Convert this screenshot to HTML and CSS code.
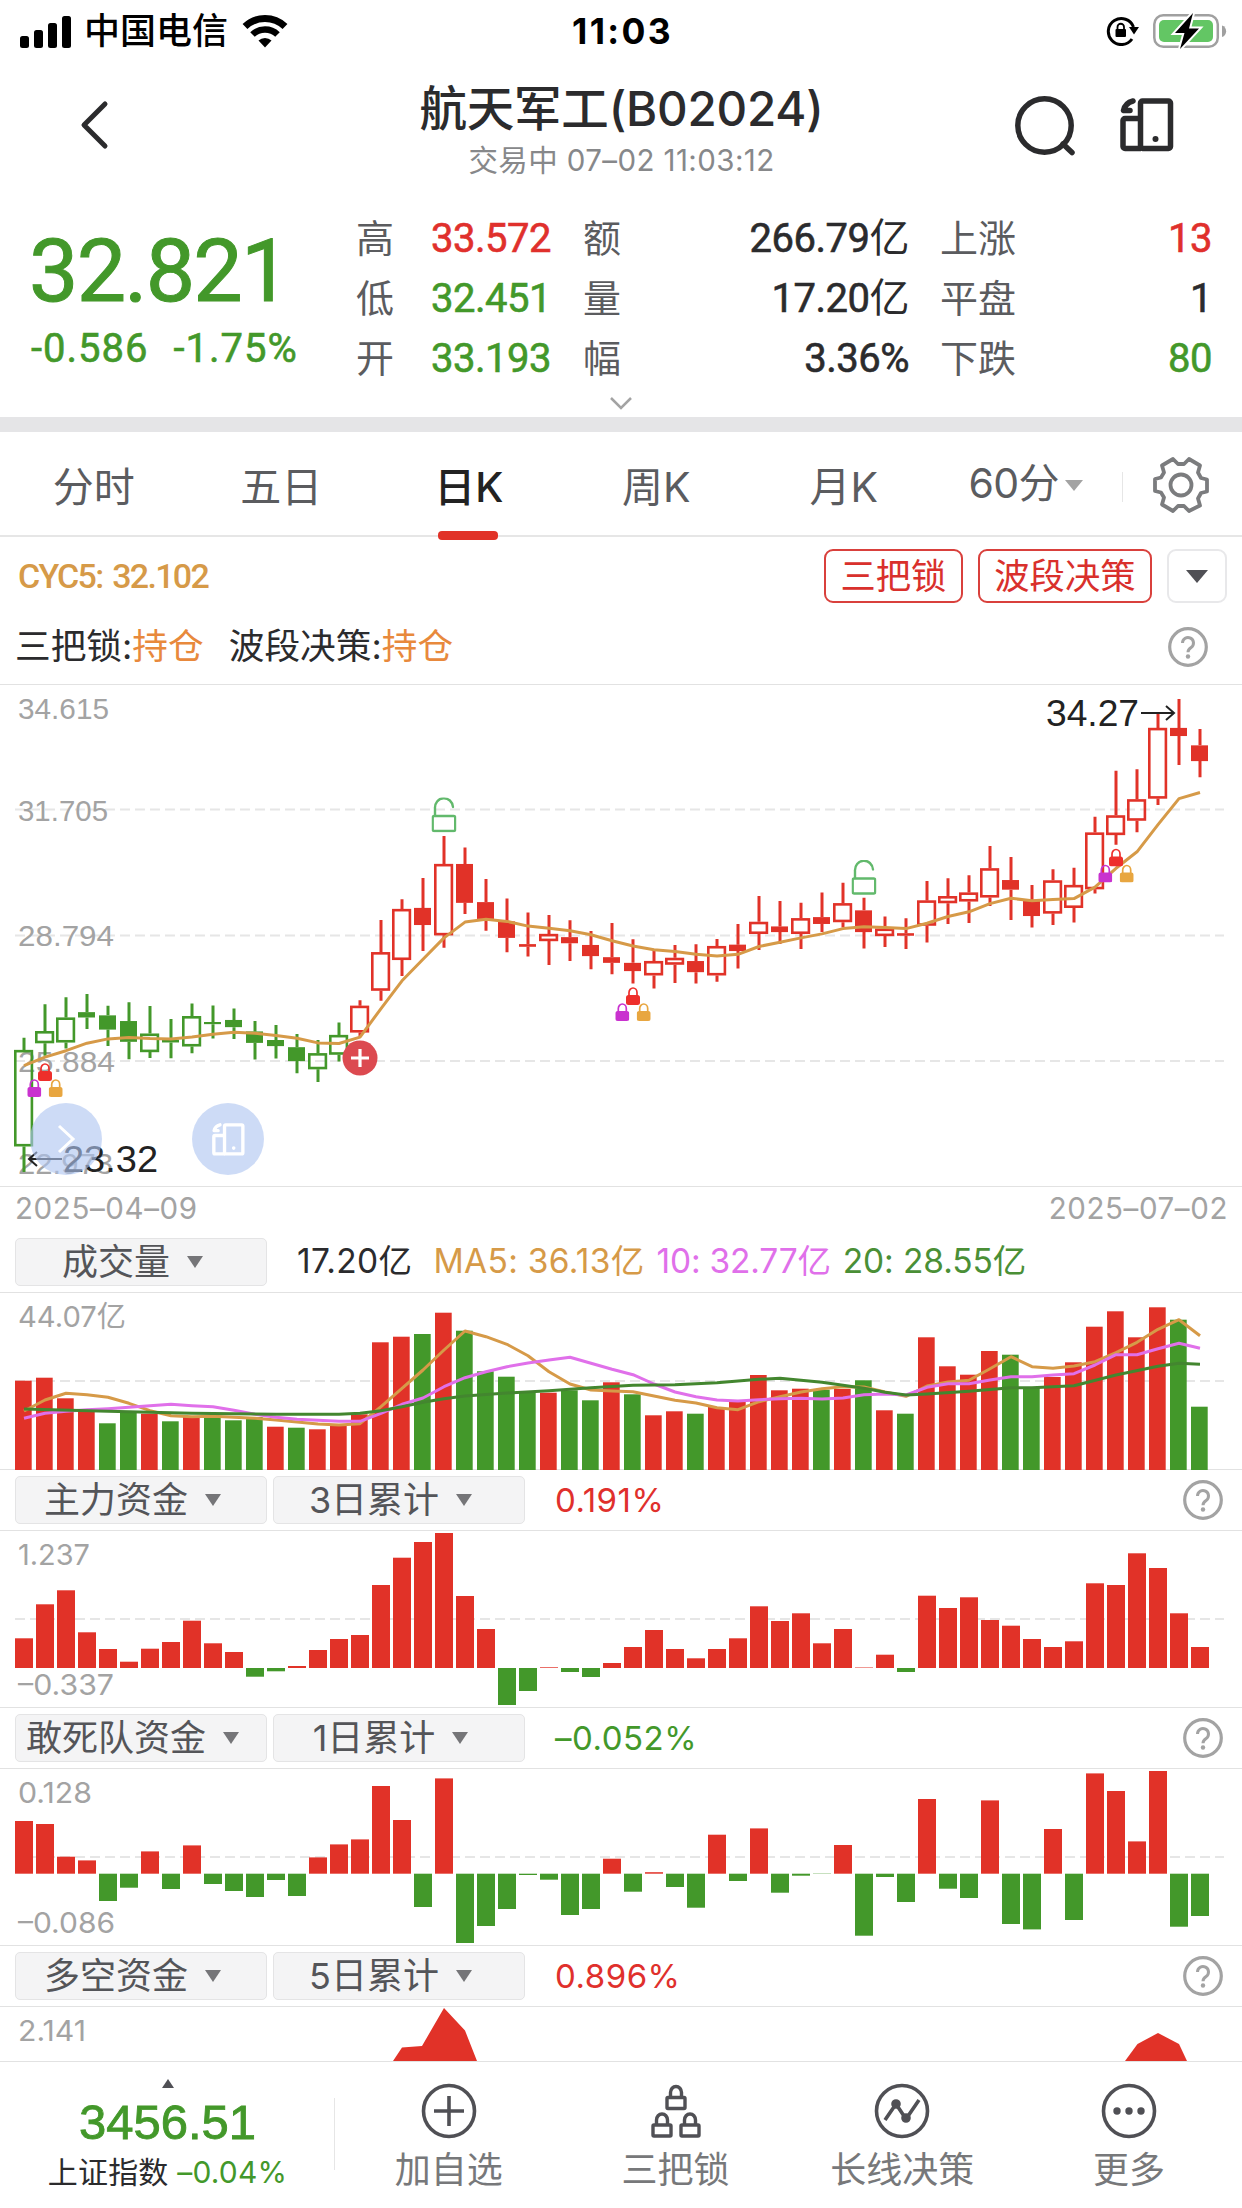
FILE: index.html
```
<!DOCTYPE html>
<html lang="zh-CN">
<head>
    <meta charset="UTF-8">
    <meta name="viewport" content="width=device-width, initial-scale=1.0">
    <title>航天军工(B02024)</title>
    <link rel="stylesheet" href="styles.css">
</head>
<body>
    <svg class="defs" width="0" height="0">
        <symbol id="i-help" viewBox="0 0 40 40">
            <circle cx="20" cy="20" r="18.3" fill="none" stroke="#a3a3a3" stroke-width="3.2"/>
            <path d="M14.5 16a5.5 5.5 0 1 1 8.6 4.5c-2.2 1.5-3.1 2.3-3.1 4.8" fill="none" stroke="#a3a3a3" stroke-width="3"/>
            <circle cx="20" cy="29.5" r="2.2" fill="#a3a3a3"/>
        </symbol>
        <symbol id="i-device" viewBox="0 0 54 54">
            <g fill="none" stroke="currentColor" stroke-width="5.5" stroke-linejoin="round">
                <rect x="20.5" y="3" width="30" height="47.5" rx="2"/>
                <path d="M20.5 20.5H5a2 2 0 0 0-2 2V48.5a2 2 0 0 0 2 2h16"/>
                <path d="M13 3C7 4.5 4.500 8 3.500 12.500H10" stroke-linecap="round"/>
            </g>
            <circle cx="35.5" cy="41" r="3" fill="currentColor"/>
        </symbol>
        <symbol id="i-lock" viewBox="0 0 14 19">
            <path d="M3 10V6.500a4 4.500 0 0 1 8 0V10" fill="none" stroke="currentColor" stroke-width="1.700"/>
            <rect x="0" y="9" width="14" height="10" rx="2.500" fill="currentColor"/>
        </symbol>
        <symbol id="i-unlock" viewBox="0 0 25 35">
            <g fill="none" stroke="#62b96c" stroke-width="2.4" stroke-linecap="round">
                <rect x="1.2" y="18.5" width="22.5" height="15" rx="1.5"/>
                <path d="M3.5 18V11a9 9.500 0 0 1 18-1.500"/>
            </g>
        </symbol>
    </svg>

    <header class="status">
        <div class="status-left">
            <svg width="52" height="33" viewBox="0 0 52 33">
                <rect x="0" y="21" width="9" height="12" rx="2.5"/>
                <rect x="14" y="15" width="9" height="18" rx="2.5"/>
                <rect x="28" y="8" width="9" height="25" rx="2.5"/>
                <rect x="42" y="1" width="9" height="32" rx="2.5"/>
            </svg>
            <span class="carrier">中国电信</span>
            <svg width="46" height="34" viewBox="0 0 46 34">
                <path d="M3 12.5a29 29 0 0 1 40 0" fill="none" stroke="#000" stroke-width="7"/>
                <path d="M10.5 20.5a18 18 0 0 1 25 0" fill="none" stroke="#000" stroke-width="6.5"/>
                <path d="M16.5 26.5a9.5 9.5 0 0 1 13 0L23 33.5z"/>
            </svg>
        </div>
        <span class="clock">11:03</span>
        <div class="status-right">
            <svg width="33" height="30" viewBox="0 0 33 30">
                <path d="M26 23A13 13 0 1 1 27.5 11" fill="none" stroke="#000" stroke-width="3"/>
                <path d="M23 11h10l-5 7.5z"/>
                <rect x="9.5" y="13" width="10.5" height="8" rx="1"/>
                <path d="M11.5 13.5v-2.5a3.2 3.2 0 0 1 6.5 0v2.5" fill="none" stroke="#000" stroke-width="1.8"/>
            </svg>
            <svg width="74" height="36" viewBox="0 0 74 36">
                <rect x="1.3" y="2.3" width="63.5" height="31.5" rx="9" fill="none" stroke="#a0a0a0" stroke-width="2.5"/>
                <rect x="6" y="7" width="54" height="22" rx="5" fill="#63c664"/>
                <path d="M69 12.5c5.5 1.5 5.5 10 0 11.5z" fill="#a0a0a0"/>
                <path d="M40 0L22 20h9.5L27 36l19-20.5H36z" stroke="#fff" stroke-width="4" paint-order="stroke"/>
            </svg>
        </div>
    </header>

    <nav class="nav">
        <svg class="back" width="32" height="50" viewBox="0 0 32 50">
            <path d="M27 4L6 25l21 21" fill="none" stroke="#2b2b2d" stroke-width="5" stroke-linecap="round" stroke-linejoin="round"/>
        </svg>
        <div class="nav-title">
            <h1>航天军工(B02024)</h1>
            <p>交易中 07–02 11:03:12</p>
        </div>
        <div class="nav-actions">
            <svg width="60" height="60" viewBox="0 0 60 60">
                <circle cx="29.5" cy="29.5" r="26.7" fill="none" stroke="#2b2b2d" stroke-width="5.5"/>
                <path d="M48 48l9 8.5" stroke="#2b2b2d" stroke-width="5.5" stroke-linecap="round"/>
            </svg>
            <svg class="device" width="54" height="54"><use href="#i-device"/></svg>
        </div>
    </nav>

    <section class="quote">
        <div class="price down">
            <div class="price-now">32.821</div>
            <div class="price-diff"><span>-0.586</span><span>-1.75%</span></div>
        </div>
        <dl class="stats">
            <dt>高</dt><dd class="up">33.572</dd><dt>额</dt><dd>266.79<i>亿</i></dd><dt>上涨</dt><dd class="up">13</dd>
            <dt>低</dt><dd class="down">32.451</dd><dt>量</dt><dd>17.20<i>亿</i></dd><dt>平盘</dt><dd>1</dd>
            <dt>开</dt><dd class="down">33.193</dd><dt>幅</dt><dd>3.36%</dd><dt>下跌</dt><dd class="down">80</dd>
        </dl>
    </section>
    <div class="expand">
        <svg width="24" height="14" viewBox="0 0 24 14"><path d="M2 2l10 10L22 2" fill="none" stroke="#a3a3a3" stroke-width="2.5"/></svg>
    </div>

    <div class="tabs">
        <span class="tab">分时</span>
        <span class="tab">五日</span>
        <span class="tab active">日K</span>
        <span class="tab">周K</span>
        <span class="tab">月K</span>
        <span class="tab tab-more">60分<b class="caret light"></b></span>
        <div class="gear">
            <svg width="56" height="56" viewBox="0 0 56 56" fill="none" stroke="#7b7c7e" stroke-width="3.8" stroke-linejoin="round">
                <path d="M20 2l5 5h6l5-5 11 6.500-2 7 3 5.500 6 1.500v12l-6 1.500-3 5.500 2 7L36 54l-5-5h-6l-5 5L9 47.500l2-7L8 35.500 2 34V22l6-1.500L11 15.500l-2-7z"/>
                <circle cx="28" cy="28" r="10.5"/>
            </svg>
        </div>
    </div>

    <div class="indicator">
        <span class="cyc">CYC5: 32.102</span>
        <span class="pill">三把锁</span>
        <span class="pill">波段决策</span>
        <span class="pill pill-drop"><b class="caret dark"></b></span>
    </div>
    <div class="signal">
        <span>三把锁:<em>持仓</em></span>
        <span>波段决策:<em>持仓</em></span>
        <svg class="help" width="40" height="40"><use href="#i-help"/></svg>
    </div>

    <div class="chart kline">
        <svg id="kline" width="1242" height="501"></svg>
        <span class="float-btn float-next">
            <svg width="20" height="30" viewBox="0 0 20 30"><path d="M3 2l14 13L3 28" fill="none" stroke="#fff" stroke-width="3"/></svg>
        </span>
        <span class="float-btn float-rotate"><svg width="33" height="33"><use href="#i-device"/></svg></span>
    </div>
    <div class="dates"><span>2025–04–09</span><span>2025–07–02</span></div>

    <div class="bar">
        <span class="select">成交量<b class="caret"></b></span>
        <div class="ma">
            <span class="c-dark">17.20亿</span>
            <span class="c-ma5">MA5: 36.13亿</span>
            <span class="c-ma10">10: 32.77亿</span>
            <span class="c-ma20">20: 28.55亿</span>
        </div>
    </div>
    <div class="chart"><svg id="volume" width="1242" height="177"></svg></div>

    <div class="bar">
        <span class="select">主力资金<b class="caret"></b></span>
        <span class="select">3日累计<b class="caret"></b></span>
        <span class="value up">0.191%</span>
        <svg class="help" width="40" height="40"><use href="#i-help"/></svg>
    </div>
    <div class="chart"><svg id="fund1" width="1242" height="177"></svg></div>

    <div class="bar">
        <span class="select">敢死队资金<b class="caret"></b></span>
        <span class="select">1日累计<b class="caret"></b></span>
        <span class="value down">–0.052%</span>
        <svg class="help" width="40" height="40"><use href="#i-help"/></svg>
    </div>
    <div class="chart"><svg id="fund2" width="1242" height="177"></svg></div>

    <div class="bar">
        <span class="select">多空资金<b class="caret"></b></span>
        <span class="select">5日累计<b class="caret"></b></span>
        <span class="value up">0.896%</span>
        <svg class="help" width="40" height="40"><use href="#i-help"/></svg>
    </div>
    <div class="chart chart-cut">
        <svg id="fund3" width="1242" height="54">
            <path d="M393 54L402 40.5 422 39 444 1 465 23.5 477 54z" fill="#e13228"/>
            <path d="M1125 54L1137.5 37 1158 26 1179 37 1187 54z" fill="#e13228"/>
        </svg>
    </div>

    <footer class="footer">
        <div class="index">
            <b class="caret-up"></b>
            <strong class="down">3456.51</strong>
            <span>上证指数 <i class="down">–0.04%</i></span>
        </div>
        <div class="action">
            <svg width="56" height="56" viewBox="0 0 56 56" fill="none" stroke="#505055" stroke-width="3.6">
                <circle cx="28" cy="28" r="25.5"/>
                <path d="M28 13v30M13 28h30"/>
            </svg>
            <span>加自选</span>
        </div>
        <div class="action">
            <svg width="56" height="56" viewBox="0 0 56 56" fill="none" stroke="#505055" stroke-width="3.4">
                <rect x="19" y="14.5" width="18" height="11" rx="1"/>
                <path d="M22.5 14V9.5a5.5 6 0 0 1 11 0V14"/>
                <rect x="5" y="42" width="18" height="11" rx="1"/>
                <path d="M8.5 41.5V37a5.5 6 0 0 1 11 0v4.5"/>
                <rect x="33" y="42" width="18" height="11" rx="1"/>
                <path d="M36.5 41.5V37a5.5 6 0 0 1 11 0v4.5"/>
            </svg>
            <span>三把锁</span>
        </div>
        <div class="action">
            <svg width="56" height="56" viewBox="0 0 56 56" fill="none" stroke="#505055" stroke-width="3.6">
                <circle cx="28" cy="28" r="25.5"/>
                <path d="M11 37L22 21 32 36 45 17"/>
                <circle cx="22" cy="21" r="3" fill="#505055"/>
                <circle cx="32" cy="35" r="3" fill="#505055"/>
            </svg>
            <span>长线决策</span>
        </div>
        <div class="action">
            <svg width="56" height="56" viewBox="0 0 56 56" fill="none" stroke="#505055" stroke-width="3.6">
                <circle cx="28" cy="28" r="25.5"/>
                <g fill="#505055" stroke="none">
                    <circle cx="16" cy="28" r="3.7"/>
                    <circle cx="28" cy="28" r="3.7"/>
                    <circle cx="40" cy="28" r="3.7"/>
                </g>
            </svg>
            <span>更多</span>
        </div>
    </footer>

    <script src="chart.js"></script>
</body>
</html>
```
FILE: styles.css
```
* {
    box-sizing: border-box;
}
body {
    margin: 0;
    width: 1242px;
    height: 2208px;
    overflow: hidden;
    background: #fff;
    color: #2b2b2d;
    font-family: Inter, "Noto Sans CJK SC", sans-serif;
    display: flex;
    flex-direction: column;
}
body > * {
    flex-shrink: 0;
}
svg {
    display: block;
    flex-shrink: 0;
}
i, em {
    font-style: normal;
}
.defs {
    position: absolute;
}
.up {
    color: #e0302c;
}
.down {
    color: #43982a;
}

/* 状态栏 */
.status {
    height: 62px;
    padding: 0 15px 0 20px;
    display: grid;
    grid-template-columns: 1fr auto 1fr;
    align-items: center;
    color: #000;
}
.status-left, .status-right {
    display: flex;
    align-items: center;
}
.status-right {
    justify-content: flex-end;
    gap: 14px;
}
.carrier {
    margin: 0 14px 0 12px;
    font-size: 36px;
    font-weight: 500;
    line-height: 62px;
}
.clock {
    font-size: 35.5px;
    font-weight: 700;
    letter-spacing: 2.3px;
    margin-right: 2px;
}

/* 标题栏 */
.nav {
    height: 144px;
    display: flex;
    justify-content: space-between;
    padding: 0 68px 0 78px;
}
.back {
    margin-top: 38px;
}
.nav-title {
    text-align: center;
    padding-left: 118px;
}
.nav-title h1 {
    margin: 14px 0 0;
    font-size: 47.5px;
    font-weight: 500;
    line-height: 66px;
    letter-spacing: -0.2px;
}
.nav-title p {
    margin: 0;
    font-size: 29.5px;
    line-height: 37px;
    color: #87888a;
    letter-spacing: 0.4px;
}
.nav-actions {
    display: flex;
    gap: 45px;
    padding-top: 34px;
    color: #2b2b2d;
}
.device {
    margin-top: 2px;
}

/* 行情 */
.quote {
    height: 182px;
    display: flex;
    padding: 0 30px 0 29px;
    font-family: Roboto, "Noto Sans CJK SC", sans-serif;
}
.price {
    width: 327px;
}
.price-now {
    font-size: 88px;
    font-weight: 400;
    -webkit-text-stroke: 1px #43982a;
    line-height: 100px;
    margin-top: 15px;
    letter-spacing: -1.8px;
}
.price-diff {
    display: flex;
    gap: 25px;
    padding-left: 2px;
    font-size: 40px;
    font-weight: 400;
    -webkit-text-stroke: 0.6px #43982a;
    line-height: 56px;
    letter-spacing: 1px;
}
.stats {
    flex: 1;
    margin: 0;
    padding-top: 3px;
    display: grid;
    grid-template-columns: 75px 152px 74px 252px 107px 1fr;
    grid-auto-rows: 60px;
    line-height: 60px;
    white-space: nowrap;
}
.stats dt {
    font-size: 38px;
    color: #5b5c5f;
}
.stats dt:nth-of-type(3n) {
    padding-left: 31px;
}
.stats dd {
    margin: 0;
    font-size: 40px;
    font-weight: 400;
    -webkit-text-stroke: 0.6px currentColor;
    letter-spacing: -0.5px;
    text-align: right;
}
.stats dd:nth-of-type(3n+1) {
    text-align: left;
}
.stats dd i {
    -webkit-text-stroke: 0;
}
.expand {
    height: 44px;
    padding-top: 8px;
    display: flex;
    justify-content: center;
    border-bottom: 15px solid #e5e5e7;
}

/* 周期切换 */
.tabs {
    height: 105px;
    display: flex;
    border-bottom: 2px solid #e6e6e6;
    font-size: 41px;
    line-height: 111px;
    color: #5b5c5f;
}
.tab {
    width: 187.5px;
    text-align: center;
    position: relative;
}
.tab.active {
    color: #222;
    font-weight: 500;
}
.tab.active::after {
    content: "";
    position: absolute;
    left: 63px;
    bottom: -5px;
    width: 60px;
    height: 9px;
    border-radius: 4px;
    background: #e13228;
}
.tab-more {
    width: 184px;
    padding-left: 31px;
    display: flex;
    align-items: center;
    gap: 6px;
    letter-spacing: -0.6px;
}
.tab-more .caret {
    margin-top: 3px;
}
.gear {
    flex: 1;
    display: flex;
    align-items: center;
    padding: 2px 0 0 31px;
    background: linear-gradient(#e6e6e6, #e6e6e6) no-repeat 0 40px / 1px 30px;
}
.caret {
    display: inline-block;
    border: 8.5px solid transparent;
    border-top: 12px solid #757578;
    border-bottom: 0;
}
.caret.light {
    border-width: 11px 9px 0;
    border-top-color: #a3a3a3;
}
.caret.dark {
    border-width: 13px 11px 0;
    border-top-color: #505055;
}

.indicator {
    height: 78px;
    display: flex;
    align-items: center;
    padding: 0 15px 0 18px;
}
.cyc {
    flex: 1;
    color: #d69a48;
    font-family: Roboto, sans-serif;
    font-size: 34px;
    font-weight: 500;
    letter-spacing: -1.7px;
    word-spacing: 3px;
}
.pill {
    height: 54px;
    margin-left: 15px;
    padding: 0 14.5px;
    border: 2px solid #d9403c;
    border-radius: 9px;
    color: #d9302c;
    font-size: 35.3px;
    line-height: 51px;
}
.pill-drop {
    width: 60px;
    padding: 0;
    border-color: #e8e8ea;
    display: flex;
    align-items: center;
    justify-content: center;
}
.signal {
    height: 70px;
    display: flex;
    align-items: center;
    gap: 25px;
    padding: 0 34px 5px 15px;
    border-bottom: 1.5px solid #e2e2e2;
    font-size: 35.7px;
    line-height: 50px;
}
.signal span {
    margin-top: -2px;
}
.signal em {
    color: #e8893c;
}
.help {
    margin-left: auto;
}

/* 图表 */
.chart {
    border-bottom: 1.5px solid #e2e2e2;
    height: 177px;
}
.chart.kline {
    height: 502px;
    position: relative;
}
.chart-cut {
    height: 55px;
}
.float-btn {
    position: absolute;
    top: 418px;
    width: 72px;
    height: 72px;
    border-radius: 50%;
    background: rgba(174, 197, 240, 0.62);
    color: #fff;
    display: flex;
    align-items: center;
    justify-content: center;
}
.float-next {
    left: 30px;
}
.float-rotate {
    left: 192px;
}
.dates {
    height: 45px;
    display: flex;
    justify-content: space-between;
    padding: 0 14px 0 15px;
    font-size: 29.5px;
    line-height: 43px;
    letter-spacing: 0.6px;
    color: #a3a3a3;
}
.bar {
    height: 61px;
    display: flex;
    align-items: center;
    padding: 0 19px 0 15px;
    border-bottom: 1.5px solid #e2e2e2;
}
.select {
    width: 252px;
    height: 48px;
    margin-right: 6px;
    padding-right: 17px;
    display: flex;
    align-items: center;
    justify-content: center;
    gap: 17px;
    border: 1.5px solid #e4e4e5;
    border-radius: 5px;
    background: #f4f4f5;
    color: #545559;
    font-size: 36px;
    line-height: 45px;
}
.value {
    margin-left: 24px;
    font-size: 33px;
    letter-spacing: 0.5px;
}
.ma {
    display: flex;
    gap: 12px;
    margin-left: 24px;
    font-size: 33.5px;
    line-height: 50px;
    padding-bottom: 2px;
}
.ma .c-dark {
    margin-right: 9px;
    letter-spacing: 0.4px;
}
.c-ma5 {
    color: #d69a48;
    letter-spacing: 0.3px;
}
.c-ma10 {
    color: #e070ea;
    letter-spacing: -0.2px;
}
.c-ma20 {
    color: #4a8f36;
    letter-spacing: -0.1px;
}
.axis {
    font-family: Inter, "Noto Sans CJK SC", sans-serif;
    font-size: 29px;
    fill: #a3a3a3;
}
.axis.helv {
    font-family: "Liberation Sans", Arial, sans-serif;
    font-size: 30px;
}
.mark {
    font-family: "Liberation Sans", Arial, sans-serif;
    font-size: 36.5px;
    fill: #222;
}

/* 底部 */
.footer {
    height: 146px;
    display: flex;
}
.index {
    width: 335px;
    display: flex;
    flex-direction: column;
    align-items: center;
    background: linear-gradient(#e6e6e6, #e6e6e6) no-repeat 100% 36px / 1px 72px;
}
.caret-up {
    margin-top: 17px;
    border: 6px solid transparent;
    border-bottom: 9px solid #505055;
    border-top: 0;
}
.index strong {
    font-family: "Liberation Sans", Arial, sans-serif;
    font-size: 49px;
    font-weight: 400;
    -webkit-text-stroke: 0.9px #43982a;
    line-height: 56px;
    margin-top: 6px;
}
.index span {
    font-size: 30px;
    line-height: 40px;
    margin-top: 2px;
    letter-spacing: 0.2px;
}
.action {
    flex: 1;
    display: flex;
    flex-direction: column;
    align-items: center;
    padding: 21px 0 0 1px;
}
.action span {
    font-size: 36px;
    line-height: 50px;
    margin-top: 6px;
    color: #77787a;
}
```
FILE: chart.js
```
const RED = '#e13228';
const GREEN = '#43982a';
const STEP = 21;
const X0 = 24;

function add(svg, tag, attrs, text) {
    const el = document.createElementNS('http://www.w3.org/2000/svg', tag);
    for (const k in attrs) el.setAttribute(k, attrs[k]);
    if (text) el.textContent = text;
    svg.appendChild(el);
    return el;
}

function dash(svg, y) {
    add(svg, 'path', { d: `M15 ${y}H1224`, stroke: '#e6e6e6', 'stroke-width': 2, 'stroke-dasharray': '10 5' });
}

function label(svg, text, y, width, cls = 'axis', x = 18) {
    add(svg, 'text', { x, y, class: cls, textLength: width, lengthAdjust: 'spacingAndGlyphs' }, text);
}

// pts: [index, y]
function line(svg, pts, color) {
    const points = pts.map(p => `${X0 + p[0] * STEP},${p[1].toFixed(1)}`).join(' ');
    add(svg, 'polyline', { points, fill: 'none', stroke: color, 'stroke-width': 3, 'stroke-linejoin': 'round' });
}

// [type, high, bodyTop, bodyBottom, low]  h = 空心, f = 实心; 前 16 根为绿色
const candles = [
    ['h', 334, 345.3, 435.3, 459.3], ['h', 302.7, 327.7, 339, 350.7], ['h', 296, 315, 338.3, 344],
    ['f', 293, 310, 315, 325.7], ['f', 304, 313, 326.3, 341.7], ['f', 300.7, 318.3, 337.7, 354],
    ['h', 304.3, 330, 347.3, 352.7], ['f', 316.3, 335.7, 338.3, 353], ['h', 302, 313.7, 342, 348.3],
    ['f', 303.7, 319.2, 321.2, 334.7], ['f', 306.7, 317.3, 324, 335], ['f', 318.3, 328, 338.7, 354.3],
    ['f', 322, 336, 341.7, 353.3], ['f', 330.3, 342.7, 355.7, 367], ['h', 336, 348.3, 363.3, 375.3],
    ['h', 319.7, 331.3, 349.7, 356], ['h', 299, 304, 329, 332.7], ['h', 224, 254, 290, 299.3],
    ['h', 204.7, 213.7, 261.3, 276.3], ['f', 184.7, 212.7, 228.7, 253], ['h', 145.7, 171.7, 238.3, 250],
    ['f', 156.3, 171.7, 208, 218.3], ['f', 185.7, 207.3, 223, 234], ['f', 204, 225.3, 240.7, 254],
    ['f', 217, 246.5, 249, 258], ['h', 219.3, 237, 243.7, 266], ['f', 224.3, 240, 245.7, 262.3],
    ['f', 234.3, 247.3, 257.7, 270], ['f', 226.7, 258.7, 264, 274.7], ['f', 242, 264, 271.7, 283.3],
    ['h', 252.7, 262.3, 275.7, 288], ['h', 247.3, 259.3, 265.7, 282.7], ['f', 246.7, 262.3, 272.7, 283.3],
    ['h', 241.7, 248.3, 275.7, 281.7], ['f', 227.7, 247, 253, 269.3], ['h', 201.7, 225.7, 237, 252],
    ['f', 206.3, 230, 235.3, 246.3], ['h', 208, 222.3, 237, 251], ['f', 198.3, 221.3, 227.7, 235.3],
    ['h', 189.3, 208.3, 226, 231], ['f', 203.3, 215, 235.3, 250.7], ['h', 220.7, 232, 239, 249.3],
    ['f', 222.3, 236.3, 238.7, 251], ['h', 187.7, 205.7, 229.3, 245], ['h', 185, 201.7, 208.3, 227.7],
    ['h', 182.3, 198.3, 206.7, 226.7], ['h', 155, 175.7, 203, 211], ['f', 165.3, 186.7, 195.7, 224],
    ['f', 191.3, 205.3, 220.3, 231], ['h', 176.7, 187, 218, 228.7], ['h', 175.3, 191.3, 212.7, 226.3],
    ['h', 127.7, 142.3, 195.3, 199.3], ['h', 84.7, 126.3, 144.7, 153.7], ['h', 83.3, 111.3, 131.3, 142],
    ['h', 31, 44.7, 110.7, 116.7], ['f', 17.7, 44.7, 52.3, 79.3], ['f', 45.7, 61, 75.7, 90.7]
];
const cyc5 = [360, 352, 346, 339, 335, 333.7, 334.7, 335, 333.3, 330.7, 328.7, 329.7, 331.7, 334.3, 338.7, 339.3,
    333.3, 306.7, 280.7, 260.7, 240.7, 226, 223.3, 225.3, 229.7, 231.7, 234, 237.7, 243.3, 248.3, 251.7, 253.3,
    256, 257.7, 256, 248.7, 244.7, 240.7, 237, 232, 230.3, 231, 232, 227, 220.7, 216.3, 208.7, 203.7, 206, 205,
    204, 193.3, 175.7, 160.3, 135, 110.7, 105];

function drawKline() {
    const svg = document.getElementById('kline');
    const y = v => v * 15 / 14 - 5;
    [124.5, 250.5, 376].forEach(v => dash(svg, v));
    label(svg, '34.615', 34, 91, 'axis helv');
    label(svg, '31.705', 136, 90, 'axis helv');
    label(svg, '28.794', 261, 96, 'axis helv');
    label(svg, '25.884', 387, 97, 'axis helv');
    label(svg, '22.973', 489, 95, 'axis helv');

    candles.forEach(([type, high, top, bottom, low], i) => {
        const c = X0 + i * STEP;
        const color = i < 16 ? GREEN : RED;
        const t = y(top), b = y(bottom);
        add(svg, 'path', { d: `M${c} ${y(high)}V${t}M${c} ${b}V${y(low)}`, stroke: color, 'stroke-width': 3 });
        if (type === 'h') {
            add(svg, 'rect', { x: c - 8.7, y: t + 1.2, width: 16.6, height: b - t - 2.4, fill: 'none', stroke: color, 'stroke-width': 2.6 });
        } else {
            add(svg, 'rect', { x: c - 9, y: t, width: 17, height: b - t, fill: color });
        }
    });
    line(svg, cyc5.map((v, i) => [i, y(v)]), '#d69a48');

    // 三把锁
    [[1, 378], [29, 302], [52, 163.5]].forEach(([i, top]) => {
        const c = X0 + i * STEP;
        [[0, 0, '#ee2f2b'], [-10.7, 16, '#c932cf'], [10.7, 16, '#e8a640']].forEach(([dx, dy, color]) => {
            add(svg, 'use', { href: '#i-lock', x: c + dx - 7, y: top + dy - 1, width: 14, height: 19, color });
        });
    });
    [[20, 112.5], [40, 175]].forEach(([i, top]) => {
        add(svg, 'use', { href: '#i-unlock', x: X0 + i * STEP - 12.5, y: top, width: 25, height: 35 });
    });

    add(svg, 'circle', { cx: 360, cy: 373, r: 17.5, fill: '#dc4a50' });
    add(svg, 'path', { d: 'M351 373h18M360 364v18', stroke: '#fff', 'stroke-width': 3.2 });

    label(svg, '34.27', 41, 93, 'mark', 1046);
    add(svg, 'path', { d: 'M1141 28H1174M1166 21l8 7-8 7', fill: 'none', stroke: '#222', 'stroke-width': 2 });
    label(svg, '23.32', 487, 95, 'mark', 63);
    add(svg, 'path', { d: 'M62 474H29M37 467l-8 7 8 7', fill: 'none', stroke: '#222', 'stroke-width': 2 });
}

const volume = [89.3, 92.3, 71.7, 59, 46.7, 58, 56.3, 48.7, 53, 53.7, 49.7, 53, 43.3, 42.3, 40.7, 45.3, 55.7, 127.7,
    133.3, 136, 157.3, 139.3, 98.7, 93.3, 79, 77.3, 79.7, 69.7, 87.7, 75.7, 54.7, 58.7, 56.3, 63, 69.7, 95, 79.7,
    81.3, 80.3, 81, 89.7, 59.7, 56.3, 132.7, 103.7, 95.3, 119, 115.3, 83, 93, 107.7, 143.3, 158.7, 132.7, 162.7,
    150.3, 63.3];
const volumeDown = [4, 5, 7, 9, 10, 11, 13, 19, 21, 22, 23, 24, 26, 27, 29, 32, 38, 40, 42, 47, 48, 55, 56];
const ma5 = [118, 107, 100.3, 101.7, 104.3, 110.3, 117.7, 122.7, 123.7, 123.3, 124.3, 125.3, 127, 129, 131, 132,
    130.7, 113.7, 95.3, 77, 57, 38, 43.7, 51.3, 62.7, 78.7, 91, 97, 98, 98.7, 103, 107.3, 110, 114.7, 116.7, 108.7,
    103.7, 99, 95.7, 93.7, 94, 99, 103.3, 93, 89, 87.3, 75.7, 63.7, 73.7, 75.3, 73, 68.7, 59.7, 49.3, 36.3, 26.7, 42.7];
const ma10 = [125.3, 120.3, 118.3, 116.7, 115.7, 114.3, 112.7, 111.3, 112.7, 113.7, 117.3, 121.3, 124.3, 126.3, 127.3,
    128.3, 128.3, 120.3, 111.3, 105, 93.7, 84.7, 78.7, 73.7, 70, 67, 64.3, 70.3, 76.3, 81.7, 91, 99, 103.7, 107, 108,
    106.7, 105.7, 105.3, 106, 105, 101.7, 101, 102, 94.3, 90.7, 90.7, 87, 83.7, 83.7, 82, 80.7, 72, 61.7, 61.7, 55.7,
    50.3, 55.3];
const ma20 = [[0, 116], [4, 118.3], [8, 120.3], [12, 121.3], [15, 121.3], [16, 120.3], [17, 117.7], [18, 113.7],
    [19, 109.3], [20, 105.7], [21, 103], [23, 100], [25, 97.7], [27, 94.7], [29, 92.3], [31, 91.7], [33, 89.7],
    [35, 86.3], [36, 85.3], [38, 89.3], [40, 95.3], [41, 99.3], [42, 102], [43, 101], [45, 98.3], [47, 94.7],
    [48, 94.7], [50, 92.7], [52, 82], [54, 73.3], [55, 70.3], [56, 71.3]];

function drawVolume() {
    const svg = document.getElementById('volume');
    dash(svg, 88);
    label(svg, '44.07亿', 34, 108);
    volume.forEach((h, i) => {
        add(svg, 'rect', { x: 15 + i * STEP, y: 177 - h, width: 16.7, height: h, fill: volumeDown.includes(i) ? GREEN : RED });
    });
    line(svg, ma5.map((v, i) => [i, v]), '#d69a48');
    line(svg, ma10.map((v, i) => [i, v]), '#e070ea');
    line(svg, ma20, '#43862f');
}

const fund1 = [29.7, 63.7, 77.7, 35.7, 19, 6.3, 19.3, 26, 47.3, 24.7, 16, -8.7, -3.3, 2, 18, 29, 33, 83, 110.3, 126,
    135, 72, 39, -37, -23, 0.7, -4, -9, 5, 21, 38, 19, 9.7, 19, 29.7, 61.7, 47, 54.7, 24.7, 39, 0.5, 13.3, -4, 72.3,
    60, 70.7, 48, 42.3, 29, 21, 26.7, 84.7, 83, 114.7, 100, 54.7, 21];
const fund2 = [52.7, 49.7, 17, 13.3, -27.3, -14, 22.3, -15.3, 28.3, -10.3, -17.3, -23.3, -6.3, -22.3, 16.3, 29.3,
    34.3, 87.7, 53.7, -33.3, 95.3, -69.3, -52.3, -35.3, -1.3, -6, -41.3, -35.3, 15, -18, 1.5, -13.3, -34, 39, -7.3,
    45.3, -19, -2, -0.3, 28.7, -62, -3.3, -28.3, 74.7, -15, -24.3, 73.3, -50.3, -55.7, 44.7, -46.3, 100.3, 82.7,
    32.3, 102.7, -53, -42.3];

function drawFund(id, data, base, max, maxW, min, minW) {
    const svg = document.getElementById(id);
    dash(svg, 88);
    label(svg, max, 34, maxW);
    label(svg, min, 164, minW);
    data.forEach((v, i) => {
        add(svg, 'rect', {
            x: 15 + i * STEP, y: v > 0 ? base - v : base, width: 18, height: Math.abs(v), fill: v > 0 ? RED : GREEN
        });
    });
}

drawKline();
drawVolume();
drawFund('fund1', fund1, 137, '1.237', 72, '–0.337', 96);
drawFund('fund2', fund2, 104.7, '0.128', 74, '–0.086', 97);
label(document.getElementById('fund3'), '2.141', 34, 68);
```
